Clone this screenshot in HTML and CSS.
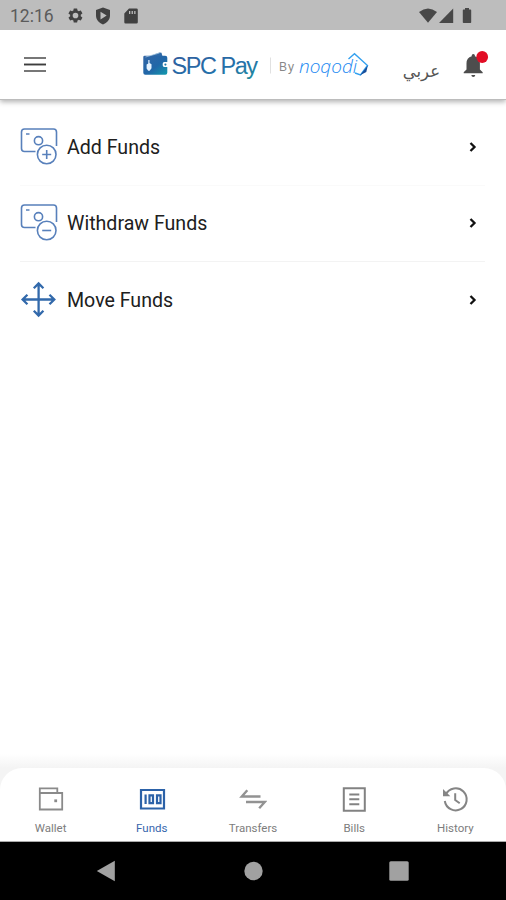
FILE: index.html
```html
<!DOCTYPE html>
<html lang="en">
<head>
<meta charset="utf-8">
<title>SPC Pay</title>
<link rel="stylesheet" href="styles.css">
</head>
<body>
<div class="screen">
  <div class="status">
    <span class="clock">12:16</span>
    <svg class="gear" width="17" height="17" viewBox="0 0 24 24"><path fill="#414141" fill-rule="evenodd" d="M19.4 13a7.500 7.500 0 0 0 0-2l2.200-1.700c.2-.1.200-.4.100-.6l-2-3.500c-.1-.2-.4-.3-.6-.2l-2.600 1a7.700 7.700 0 0 0-1.700-1L14.400 2.400a.5.5 0 0 0-.5-.4h-4a.5.5 0 0 0-.5.400L9 5.100a7.700 7.700 0 0 0-1.700 1l-2.500-1c-.2-.1-.5 0-.6.200l-2 3.500c-.1.200-.1.500.1.600L4.500 11a7.500 7.500 0 0 0 0 2l-2.200 1.700c-.2.100-.2.400-.1.600l2 3.500c.1.200.4.300.6.200l2.500-1c.5.400 1.100.7 1.700 1l.4 2.600c0 .2.200.4.500.4h4c.3 0 .5-.2.500-.4l.4-2.600c.6-.3 1.200-.6 1.700-1l2.600 1c.2.100.5 0 .6-.2l2-3.500c.1-.2.100-.5-.1-.6zM12 16a4 4 0 1 1 0-8 4 4 0 0 1 0 8z"/></svg>
    <svg class="shield" width="16" height="18" viewBox="0 0 16 18"><path fill="#414141" fill-rule="evenodd" d="M8 .5 15 3v5.500c0 4-3 7.500-7 9-4-1.500-7-5-7-9V3zM5.500 4.800v7.600L11.700 8.600z"/></svg>
    <svg width="14" height="16" viewBox="0 0 14 16"><path fill="#414141" fill-rule="evenodd" d="M5 .5h7.500q1.300 0 1.300 1.300v12.400q0 1.300-1.300 1.300h-11Q.3 15.500.3 14.200V5.500zM5 3v3h1.300V3zm2.600 0v3h1.300V3zm2.600 0v3h1.300V3z"/></svg>
    <svg class="signals" width="54" height="16" viewBox="0 0 54 16" fill="#484848"><path d="M0 4Q9-3 18 4L9 14.800z"/><path d="M20 15 34.200.5V15z"/><path d="M46 0h4v1.500h1.500q.7 0 .7.700v12.100q0 .7-.7.700h-7q-.7 0-.7-.7V2.200q0-.7.700-.7H46z"/></svg>
  </div>

  <header class="header">
    <svg class="menu" width="24" height="18" viewBox="0 0 24 18"><path d="M1 2h22M1 15h22" stroke="#777" stroke-width="2"/><path d="M1 8.500h22" stroke="#3d3d3d" stroke-width="1.900"/></svg>
    <svg class="brand" width="232" height="40" viewBox="140 46 232 40">
      <defs>
        <linearGradient id="wallet" x1="0" y1="0" x2="1" y2="1"><stop offset="0" stop-color="#3265a5"/><stop offset=".55" stop-color="#2167a8"/><stop offset="1" stop-color="#129bad"/></linearGradient>
        <linearGradient id="word" x1="0" y1="0" x2="1" y2="1"><stop offset="0" stop-color="#325b9c"/><stop offset=".6" stop-color="#2470aa"/><stop offset="1" stop-color="#218e9c"/></linearGradient>
      </defs>
      <path fill="#2f6aa8" d="m148 56.500 11.500-4 2 .3 1 3.700z"/>
      <path fill="url(#wallet)" d="M143.300 57q0-1.300 1.500-1.200h20.400q2.100 0 2.100 2v4.200h-3q-1.600 0-1.600 1.800v1.500q0 1.700 1.600 1.700h3v5.700q0 2-2 2h-20q-2 0-2-2z"/>
      <path d="m145.500 57 14-4" stroke="#b9d5eb" stroke-width=".7"/>
      <path fill="#e6f3ff" d="M148.300 60h1.200v3l2 1.200v4l-1.800 2.500h-1.500l-1.600-2.300v-4l1.700-1z"/>
      <circle cx="165.400" cy="64.600" r="1.100" fill="#2079a9"/>
      <text class="wordmark" x="171.500" y="74" fill="url(#word)" textLength="86.500" lengthAdjust="spacing">SPC Pay</text>
      <path d="M270.500 57.500v16" stroke="#e1e1e1"/>
      <text class="by" x="279" y="71" textLength="15">By</text>
      <text class="partner" x="299" y="72.500" textLength="58" lengthAdjust="spacingAndGlyphs">noqodi</text>
      <path d="m348.500 59 6-5.300 13 11.800-7 9.500-5.500-2" fill="none" stroke="#33a0ef" stroke-width="1.400"/>
      <path d="m367.800 65.500-1.500 6.500-6.300 3.300z" fill="#164d9a"/>
    </svg>
    <span class="lang" lang="ar">عربي</span>
    <svg class="bell" width="28" height="30" viewBox="462 48 28 30"><path fill="#4d4d4d" d="M471.700 54.500q0-1.500 1.600-1.500t1.600 1.500v.7q5 1.500 5 7v6.300l2.800 2.700v1h-19v-1l2.800-2.700v-6.300q0-5.500 5.200-7zM471.300 74h4q-.2 2-2 2t-2-2z"/><circle cx="482.200" cy="56" r="5.900" fill="#e20d25"/></svg>
  </header>

  <main class="list">
    <div class="row">
      <svg class="icon" width="38" height="38" viewBox="0 0 38 38" fill="none" stroke="#5880bb" stroke-width="1.600"><path d="M15.500 23.500h-11Q1.500 23.500 1.500 20.500V4Q1.500 1 4.500 1h29q3 0 3 3v14M6 6h3.500"/><circle cx="18.500" cy="12.700" r="4.100"/><circle cx="26.700" cy="26.500" r="9.300"/><path d="M26.700 22v9M22.200 26.500h9"/></svg>
      <span class="label">Add Funds</span>
      <svg class="chevron" width="8" height="12" viewBox="0 0 8 12"><path d="m1.500 2 4 4-4 4" fill="none" stroke="#111" stroke-width="2.300"/></svg>
    </div>
    <div class="row">
      <svg class="icon" width="38" height="38" viewBox="0 0 38 38" fill="none" stroke="#5880bb" stroke-width="1.600"><path d="M15.500 23.500h-11Q1.500 23.500 1.500 20.500V4Q1.500 1 4.500 1h29q3 0 3 3v14M6 6h3.500"/><circle cx="18.500" cy="12.700" r="4.100"/><circle cx="26.700" cy="26.500" r="9.300"/><path d="M22.200 26.500h9"/></svg>
      <span class="label">Withdraw Funds</span>
      <svg class="chevron" width="8" height="12" viewBox="0 0 8 12"><path d="m1.500 2 4 4-4 4" fill="none" stroke="#111" stroke-width="2.300"/></svg>
    </div>
    <div class="row">
      <svg class="icon" width="38" height="38" viewBox="0 0 38 38" fill="none" stroke="#3269ab" stroke-width="2.300"><path d="M18.600 3v31M3 18.500h31.500M13.800 7.200l4.800-4.800 4.800 4.800M13.800 29.800l4.800 4.800 4.800-4.800M7.400 13.700l-4.800 4.800 4.800 4.800M29.500 13.700l4.800 4.800-4.800 4.800"/></svg>
      <span class="label">Move Funds</span>
      <svg class="chevron" width="8" height="12" viewBox="0 0 8 12"><path d="m1.500 2 4 4-4 4" fill="none" stroke="#111" stroke-width="2.300"/></svg>
    </div>
  </main>

  <div class="dock">
    <nav class="tabs">
      <div class="tab">
        <svg width="28" height="28" viewBox="0 0 28 28" fill="none" stroke="#8a8a8a" stroke-width="1.800"><path d="M2.800 8V3.400h17.500V8M2.800 8h22.400v16.500H2.800z"/><path d="M17.300 15.800h2.800" stroke-width="2.800"/></svg>
        <span>Wallet</span>
      </div>
      <div class="tab active">
        <svg width="28" height="28" viewBox="0 0 28 28" fill="none" stroke="#2c62a8" stroke-width="2.200"><path d="M3 5h23v18.500H3zM7.600 9.500v9.500M11.500 10.300h3.500v7.800h-3.500zM19 10.300h3.500v7.800H19z"/></svg>
        <span>Funds</span>
      </div>
      <div class="tab">
        <svg width="28" height="28" viewBox="0 0 28 28" fill="none" stroke="#929292" stroke-width="2.400"><path d="M21.500 11.500H2.800l5.500-6.200M7 17h18.800l-5.600 6.200"/></svg>
        <span>Transfers</span>
      </div>
      <div class="tab">
        <svg width="28" height="28" viewBox="0 0 28 28" fill="none" stroke="#828282" stroke-width="2"><path d="M3.800 3.300h21v22.400h-21zM9.300 9.500h10M9.300 14.300h10M9.300 19.300h10"/></svg>
        <span>Bills</span>
      </div>
      <div class="tab">
        <svg width="28" height="28" viewBox="0 0 28 28" fill="none" stroke="#858585" stroke-width="2"><path d="M4.800 9.500A11 11 0 1 1 3.800 16M14.200 8.300V15l4.500 3.300"/><path d="M2 4v7.300h7.300z" fill="#858585" stroke="none"/></svg>
        <span>History</span>
      </div>
    </nav>
  </div>

  <div class="system">
    <svg width="20" height="22" viewBox="0 0 20 22"><path fill="#a1a1a1" d="M.8 11 18.800.7v20.600z"/></svg>
    <svg width="20" height="22" viewBox="0 0 20 22"><circle cx="10.500" cy="11" r="9.200" fill="#a1a1a1"/></svg>
    <svg width="20" height="22" viewBox="0 0 20 22"><rect x=".3" y="1.300" width="19.400" height="19.400" rx="1.500" fill="#a1a1a1"/></svg>
  </div>
</div>
</body>
</html>
```
FILE: styles.css
```css
* { box-sizing: border-box; }
body { margin: 0; background: #fff; font-family: Roboto, "Liberation Sans", sans-serif; }
svg { display: block; flex: none; }
.screen { width: 506px; height: 900px; display: flex; flex-direction: column; overflow: hidden; }

.status { height: 30px; flex: none; display: flex; align-items: center; padding: 1px 33px 0 10px; background: #bdbdbd; }
.clock { width: 57px; font-size: 17.500px; color: #5b5b5b; }
.gear { margin-right: 11px; }
.shield { margin-right: 13px; }
.signals { margin-left: auto; }

.header { height: 70px; flex: none; display: flex; align-items: center; padding: 0 16px 0 23px; background: #fff; border-bottom: 1px solid #bcbcbc; box-shadow: 0 2px 5px rgba(0, 0, 0, .3); clip-path: inset(0 0 -12px 0); }
.brand { margin-left: 93px; margin-top: 3px; }
.wordmark { font: 23.500px "Liberation Sans", sans-serif; }
.by { font: 12px "Liberation Sans", sans-serif; fill: #888; }
.partner { font: italic 300 17.500px "Open Sans", sans-serif; fill: #2088f2; }
.lang { width: 38px; margin: 13px 22px 0 30px; font: 16.500px "DejaVu Sans", sans-serif; color: #555; white-space: nowrap; direction: rtl; }
.bell { margin-bottom: 2px; }

.list { padding: 9px 21px 0 20px; flex: 1; }
.row { height: 76.500px; display: flex; align-items: center; border-bottom: 1px solid #f3f3f3; padding-right: 8px; }
.row:first-child { border-color: #fafafa; }
.row:last-child { border: 0; }
.label { margin: 1px 0 0 9px; font-size: 19.600px; color: #202020; }
.chevron { margin-left: auto; }

.dock { flex: none; height: 88px; padding-top: 14px; background: linear-gradient(#fff, #f4f4f4 14px); }
.tabs { height: 74px; display: grid; grid-template-columns: repeat(5, 1fr); border-radius: 22px 22px 0 0; background: #fff; border-bottom: 1px solid #aaa; }
.tab { display: flex; flex-direction: column; align-items: center; padding-top: 17px; font-size: 11.500px; line-height: 14px; color: #7d7d7d; }
.tab span { margin-top: 8px; }
.active { color: #3766ad; }

.system { flex: none; height: 58px; display: flex; justify-content: space-between; align-items: center; padding: 0 97px 0 96px; background: #000; }
```
